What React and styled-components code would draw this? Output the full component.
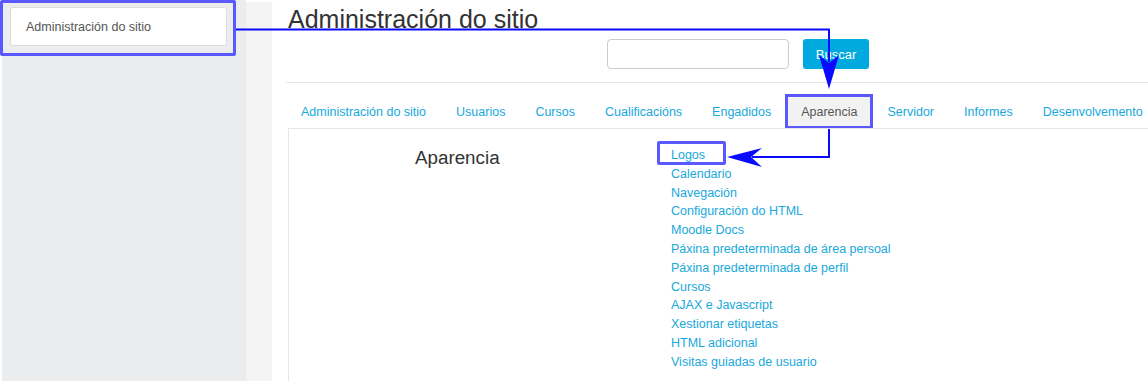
import React from 'react';
import styled, { createGlobalStyle } from 'styled-components';

const GlobalStyle = createGlobalStyle`
  body {
    margin: 0;
    background: #ffffff;
    font-family: "Liberation Sans", Arial, Helvetica, sans-serif;
  }
  ul {
    list-style: none;
    margin: 0;
    padding: 0;
  }
`;

const MARK = '#5959ff';
const LINK = '#17a8dc';

const Page = styled.div`
  position: relative;
  display: flex;
  height: 381px;
  padding-left: 2px;
  overflow: hidden;
`;

const Sidebar = styled.aside`
  width: 244px;
  flex-shrink: 0;
  background: #ebecee;
`;

const Callout = styled.div`
  box-sizing: border-box;
  width: 236px;
  height: 56px;
  margin-left: -2px;
  padding: 4px 6px 7px 7px;
  border: 3px solid ${MARK};
  border-radius: 2px;
`;

const NavCard = styled.div`
  box-sizing: border-box;
  height: 39px;
  padding-left: 15px;
  background: #ffffff;
  border: 1px solid #dcdcdc;
  border-radius: 3px;
  color: #555555;
  font-size: 12.5px;
  line-height: 39px;
`;

const Gutter = styled.div`
  width: 26px;
  flex-shrink: 0;
  margin-top: 2px;
  background: #f3f3f3;
`;

const Main = styled.main`
  flex: 1;
  display: flex;
  flex-direction: column;
  padding-left: 16px;
`;

const Title = styled.h1`
  margin: 0;
  padding-top: 4px;
  font-size: 25px;
  line-height: 30px;
  font-weight: 400;
  color: #333333;
`;

const SearchRow = styled.form`
  display: flex;
  gap: 14px;
  margin: 5px 0 13px 319px;
`;

const SearchInput = styled.input`
  box-sizing: border-box;
  width: 182px;
  height: 30px;
  border: 1px solid #cccccc;
  border-radius: 4px;
`;

const Button = styled.button`
  box-sizing: border-box;
  width: 66px;
  height: 30px;
  border: 0;
  border-radius: 3px;
  background: #00a9de;
  color: #ffffff;
  font-family: inherit;
  font-size: 13px;
`;

const Tabs = styled.ul`
  display: flex;
  height: 33px;
  margin-left: -2px !important;
  padding-top: 12px !important;
  border-top: 1px solid #e6e6e6;
  white-space: nowrap;
`;

const Tab = styled.li`
  height: 33px;
  box-sizing: border-box;
  padding: 2px 15px 0;
  font-size: 12.5px;
  line-height: 31px;
  color: ${(p) => (p.$active ? '#555555' : LINK)};
  background: ${(p) => (p.$active ? '#f2f2f2' : 'transparent')};
  outline: ${(p) => (p.$active ? `3px solid ${MARK}` : 'none')};
  outline-offset: -2px;
`;

const Panel = styled.section`
  flex: 1;
  display: grid;
  grid-template-columns: 382px 1fr;
  padding-top: 17px;
  border-top: 1px solid #e6e6e6;
  border-left: 1px solid #e6e6e6;
`;

const SectionTitle = styled.h2`
  margin: 0;
  padding-left: 126px;
  font-size: 18.8px;
  line-height: 23px;
  font-weight: 400;
  color: #333333;
`;

const LinkList = styled.ul`
  font-size: 12.5px;
  line-height: 18.8px;
`;

const Link = styled.a`
  position: relative;
  color: ${LINK};
  text-decoration: none;

  ${(p) =>
    p.$marked &&
    `
    &::after {
      content: '';
      position: absolute;
      left: -14px;
      right: -21px;
      top: -7px;
      bottom: -3px;
      border: 3px solid ${MARK};
      border-radius: 2px;
    }
  `}
`;

const Annotations = styled.svg`
  position: absolute;
  top: 0;
  left: 0;
  pointer-events: none;
`;

const tabs = [
  'Administración do sitio',
  'Usuarios',
  'Cursos',
  'Cualificacións',
  'Engadidos',
  'Aparencia',
  'Servidor',
  'Informes',
  'Desenvolvemento',
];

const links = [
  'Logos',
  'Calendario',
  'Navegación',
  'Configuración do HTML',
  'Moodle Docs',
  'Páxina predeterminada de área persoal',
  'Páxina predeterminada de perfil',
  'Cursos',
  'AJAX e Javascript',
  'Xestionar etiquetas',
  'HTML adicional',
  'Visitas guiadas de usuario',
];

export default function App() {
  return (
    <>
      <GlobalStyle />
      <Page>
        <Sidebar>
          <Callout>
            <NavCard>Administración do sitio</NavCard>
          </Callout>
        </Sidebar>
        <Gutter />
        <Main>
          <Title>Administración do sitio</Title>
          <SearchRow onSubmit={(e) => e.preventDefault()}>
            <SearchInput type="text" />
            <Button type="submit">Buscar</Button>
          </SearchRow>
          <Tabs>
            {tabs.map((t) => (
              <Tab key={t} $active={t === 'Aparencia'}>
                {t}
              </Tab>
            ))}
          </Tabs>
          <Panel>
            <SectionTitle>Aparencia</SectionTitle>
            <LinkList>
              {links.map((l, i) => (
                <li key={l + i}>
                  <Link href="#" $marked={i === 0}>
                    {l}
                  </Link>
                </li>
              ))}
            </LinkList>
          </Panel>
        </Main>
        <Annotations width="1148" height="381" viewBox="0 0 1148 381">
          <path d="M236 29.5 H829 V62" fill="none" stroke="#0a0aff" strokeWidth="2" />
          <polygon points="829,89 819,55 829,63 839,55" fill="#0a0aff" />
          <path d="M829 129 V157 H752" fill="none" stroke="#0a0aff" strokeWidth="2" />
          <polygon points="727,157 762,148 751,157 762,167" fill="#0a0aff" />
        </Annotations>
      </Page>
    </>
  );
}
